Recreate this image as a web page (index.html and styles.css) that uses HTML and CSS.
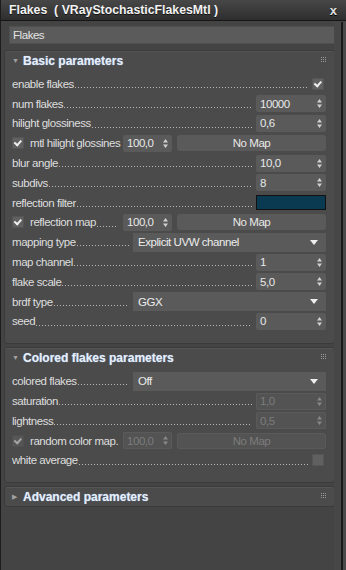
FILE: index.html
```html
<!DOCTYPE html>
<html lang="en">
<head>
  <meta charset="UTF-8" />
  <title>Flakes</title>
  <link rel="stylesheet" href="styles.css">
</head>
<body>
  <div class="window">
    <div class="titlebar">
      <span class="title">Flakes&nbsp; ( VRayStochasticFlakesMtl )</span>
      <span class="close">x</span>
    </div>

    <div class="content">
      <div class="namefield">Flakes</div>

      <div class="rollout">
        <div class="rollout-head">
          <span class="tri">&#9660;</span>
          <span class="rollout-title">Basic parameters</span>
          <svg class="grip" width="5" height="5" viewBox="0 0 5 5"><path d="M0 0h1v1H0zM2 0h1v1H2zM4 0h1v1H4zM0 2h1v1H0zM2 2h1v1H2zM4 2h1v1H4zM0 4h1v1H0zM2 4h1v1H2zM4 4h1v1H4z"/></svg>
        </div>
        <div class="rows">
          <div class="row">
            <span class="label">enable flakes</span><span class="dots"></span>
            <span class="check on"></span>
          </div>
          <div class="row">
            <span class="label">num flakes</span><span class="dots"></span>
            <span class="spin">10000<svg class="arrows" width="5" height="9" viewBox="0 0 5 9"><path d="M0 3.5h5L2.5 0zM0 5.5h5L2.5 9z"/></svg></span>
          </div>
          <div class="row">
            <span class="label">hilight glossiness</span><span class="dots"></span>
            <span class="spin">0,6<svg class="arrows" width="5" height="9" viewBox="0 0 5 9"><path d="M0 3.5h5L2.5 0zM0 5.5h5L2.5 9z"/></svg></span>
          </div>
          <div class="row">
            <span class="check on lead"></span>
            <span class="lbox"><span class="label">mtl hilight glossines</span></span>
            <span class="spin small">100,0<svg class="arrows" width="5" height="9" viewBox="0 0 5 9"><path d="M0 3.5h5L2.5 0zM0 5.5h5L2.5 9z"/></svg></span>
            <span class="mapbtn">No Map</span>
          </div>
          <div class="row">
            <span class="label">blur angle</span><span class="dots"></span>
            <span class="spin">10,0<svg class="arrows" width="5" height="9" viewBox="0 0 5 9"><path d="M0 3.5h5L2.5 0zM0 5.5h5L2.5 9z"/></svg></span>
          </div>
          <div class="row">
            <span class="label">subdivs</span><span class="dots"></span>
            <span class="spin">8<svg class="arrows" width="5" height="9" viewBox="0 0 5 9"><path d="M0 3.5h5L2.5 0zM0 5.5h5L2.5 9z"/></svg></span>
          </div>
          <div class="row">
            <span class="label">reflection filter</span><span class="dots"></span>
            <span class="swatch"></span>
          </div>
          <div class="row">
            <span class="check on lead"></span>
            <span class="lbox"><span class="label">reflection map</span><span class="dots"></span></span>
            <span class="spin small">100,0<svg class="arrows" width="5" height="9" viewBox="0 0 5 9"><path d="M0 3.5h5L2.5 0zM0 5.5h5L2.5 9z"/></svg></span>
            <span class="mapbtn">No Map</span>
          </div>
          <div class="row">
            <span class="label">mapping type</span><span class="dots"></span>
            <span class="drop">Explicit UVW channel<i class="droparrow"></i></span>
          </div>
          <div class="row">
            <span class="label">map channel</span><span class="dots"></span>
            <span class="spin">1<svg class="arrows" width="5" height="9" viewBox="0 0 5 9"><path d="M0 3.5h5L2.5 0zM0 5.5h5L2.5 9z"/></svg></span>
          </div>
          <div class="row">
            <span class="label">flake scale</span><span class="dots"></span>
            <span class="spin">5,0<svg class="arrows" width="5" height="9" viewBox="0 0 5 9"><path d="M0 3.5h5L2.5 0zM0 5.5h5L2.5 9z"/></svg></span>
          </div>
          <div class="row">
            <span class="label">brdf type</span><span class="dots"></span>
            <span class="drop">GGX<i class="droparrow"></i></span>
          </div>
          <div class="row">
            <span class="label">seed</span><span class="dots"></span>
            <span class="spin">0<svg class="arrows" width="5" height="9" viewBox="0 0 5 9"><path d="M0 3.5h5L2.5 0zM0 5.5h5L2.5 9z"/></svg></span>
          </div>
        </div>
      </div>

      <div class="rollout">
        <div class="rollout-head">
          <span class="tri">&#9660;</span>
          <span class="rollout-title">Colored flakes parameters</span>
          <svg class="grip" width="5" height="5" viewBox="0 0 5 5"><path d="M0 0h1v1H0zM2 0h1v1H2zM4 0h1v1H4zM0 2h1v1H0zM2 2h1v1H2zM4 2h1v1H4zM0 4h1v1H0zM2 4h1v1H2zM4 4h1v1H4z"/></svg>
        </div>
        <div class="rows">
          <div class="row">
            <span class="label">colored flakes</span><span class="dots"></span>
            <span class="drop">Off<i class="droparrow"></i></span>
          </div>
          <div class="row disabled">
            <span class="label">saturation</span><span class="dots"></span>
            <span class="spin">1,0<svg class="arrows" width="5" height="9" viewBox="0 0 5 9"><path d="M0 3.5h5L2.5 0zM0 5.5h5L2.5 9z"/></svg></span>
          </div>
          <div class="row disabled">
            <span class="label">lightness</span><span class="dots"></span>
            <span class="spin">0,5<svg class="arrows" width="5" height="9" viewBox="0 0 5 9"><path d="M0 3.5h5L2.5 0zM0 5.5h5L2.5 9z"/></svg></span>
          </div>
          <div class="row disabled">
            <span class="check on lead"></span>
            <span class="lbox"><span class="label">random color map.</span></span>
            <span class="spin small">100,0<svg class="arrows" width="5" height="9" viewBox="0 0 5 9"><path d="M0 3.5h5L2.5 0zM0 5.5h5L2.5 9z"/></svg></span>
            <span class="mapbtn">No Map</span>
          </div>
          <div class="row">
            <span class="label">white average</span><span class="dots"></span>
            <span class="check"></span>
          </div>
        </div>
      </div>

      <div class="rollout closed">
        <div class="rollout-head">
          <span class="tri side">&#9654;</span>
          <span class="rollout-title">Advanced parameters</span>
          <svg class="grip" width="5" height="5" viewBox="0 0 5 5"><path d="M0 0h1v1H0zM2 0h1v1H2zM4 0h1v1H4zM0 2h1v1H0zM2 2h1v1H2zM4 2h1v1H4zM0 4h1v1H0zM2 4h1v1H2zM4 4h1v1H4z"/></svg>
        </div>
      </div>
    </div>
  </div>
</body>
</html>
```

FILE: styles.css
```css
body {
  margin: 0;
  background: #444444;
  font-family: "Liberation Sans", Arial, sans-serif;
  font-size: 11.5px;
  letter-spacing: -0.45px;
  color: #dcdcdc;
}

.window {
  width: 346px;
  height: 570px;
  box-sizing: border-box;
  border-left: 1px solid #1c1c1c;
  background: #444444;
  overflow: hidden;
  position: relative;
}

/* right side scroll strip */
.window::after {
  content: "";
  position: absolute;
  top: 22px;
  right: 0;
  width: 9px;
  bottom: 0;
  background: #474747;
  border-right: 3px solid #4a4a4a;
  box-shadow: inset -2px 0 0 #1a1a1a;
}

.titlebar {
  height: 20px;
  display: flex;
  align-items: center;
  justify-content: space-between;
  padding: 0 9px 0 8px;
  background: linear-gradient(#474747, #2e2e2e);
  border-bottom: 1px solid #161616;
  letter-spacing: 0;
}

.title {
  font-weight: bold;
  font-size: 12.3px;
  color: #f2f2f2;
  text-shadow: 0 1px 0 #111;
}

.close {
  font-weight: bold;
  font-size: 13px;
  color: #e0e0e0;
  text-shadow: 0 1px 0 #000;
}

.content {
  padding: 5px 11px 0 3px;
}

.namefield {
  margin-left: 5px;
  margin-right: -4px;
  height: 16px;
  line-height: 16px;
  padding-left: 3px;
  background: #5b5b5b;
  color: #e4e4e4;
  border: 1px solid #4f4f4f;
}

.rollout {
  margin-top: 6px;
  background: #4b4b4b;
  border: 1px solid #3b3b3b;
  border-radius: 3px;
  box-shadow: inset 0 1px 0 #555;
  padding-bottom: 12px;
}

.rollout + .rollout {
  margin-top: 3px;
}

.rollout.closed {
  padding-bottom: 0;
}

.rollout-head {
  height: 19px;
  display: flex;
  align-items: center;
  padding: 0 7px;
  letter-spacing: 0;
}

.tri {
  font-size: 7px;
  color: #a0a0a0;
  width: 8px;
}

.rollout-title {
  flex: 1;
  font-weight: bold;
  font-size: 12px;
  color: #e6eef9;
  text-shadow: 0 0 1px #8fb0d8;
  padding-left: 3px;
}

.grip {
  fill: #9a9a9a;
  margin-right: 1px;
  margin-top: -2px;
}

.rows {
  padding: 4px 8px 0 7px;
}

.row {
  height: 19.8px;
  display: flex;
  align-items: center;
}

.label {
  white-space: nowrap;
  color: #dedede;
}

.lbox {
  width: 92px;
  margin-left: 6px;
  display: flex;
  align-self: stretch;
  align-items: center;
  overflow: hidden;
}

.dots {
  flex: 1;
  align-self: stretch;
  margin: 0 4px 0 1px;
  background-image: linear-gradient(to right, #b8b8b8 1px, transparent 1px);
  background-size: 3px 1px;
  background-repeat: repeat-x;
  background-position: left 13px;
}

.check {
  width: 10px;
  height: 10px;
  background: #606060;
  border: 1px solid #555555;
  margin-right: 2px;
  position: relative;
}

.check.on::after {
  content: "";
  position: absolute;
  left: 2px;
  top: 1px;
  width: 5px;
  height: 3px;
  border-left: 2px solid #f0f0f0;
  border-bottom: 2px solid #f0f0f0;
  transform: rotate(-48deg) translate(-1px, 0);
}

.check.lead {
  margin-right: 0;
}

.spin {
  width: 70px;
  height: 17px;
  box-sizing: border-box;
  padding-left: 4px;
  background: #5a5a5a;
  border-radius: 2px;
  display: flex;
  align-items: center;
  justify-content: space-between;
  color: #e8e8e8;
}

.spin.small {
  width: 49px;
  margin-left: 1px;
}

.arrows {
  fill: #d0d0d0;
  margin-right: 4px;
}

.mapbtn {
  flex: 1;
  height: 16px;
  margin-left: 5px;
  background: #5a5a5a;
  border-radius: 3px;
  display: flex;
  align-items: center;
  justify-content: center;
  color: #e8e8e8;
}

.swatch {
  width: 68px;
  height: 13px;
  background: #0a3a51;
  border: 1px solid #111;
}

.drop {
  width: 193px;
  height: 19px;
  box-sizing: border-box;
  padding-left: 5px;
  background: #5a5a5a;
  display: flex;
  align-items: center;
  justify-content: space-between;
  color: #ececec;
}

.droparrow {
  width: 0;
  height: 0;
  border-left: 4px solid transparent;
  border-right: 4px solid transparent;
  border-top: 5px solid #eeeeee;
  margin-right: 8px;
}

.row.disabled .spin,
.row.disabled .mapbtn {
  background: #535353;
  color: #7c7c7c;
  box-shadow: inset 0 0 0 1px #5a5a5a;
}

.row.disabled .arrows {
  fill: #888;
}

.row.disabled .check {
  opacity: 0.55;
}
```
